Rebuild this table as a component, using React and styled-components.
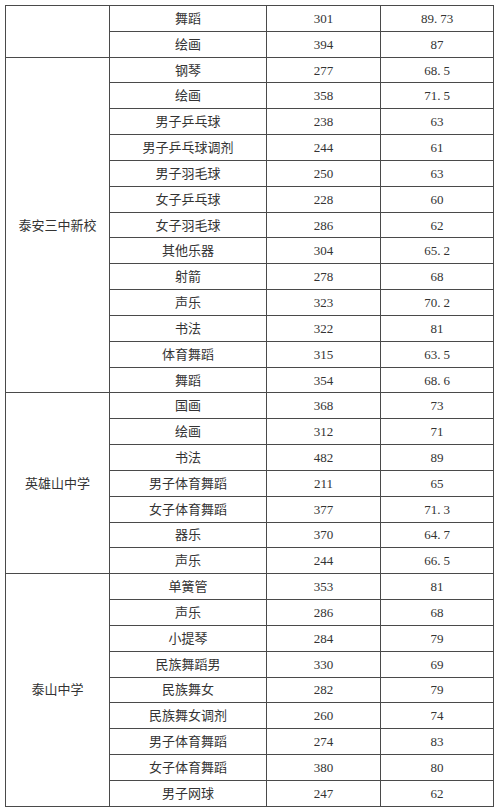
import styled, { createGlobalStyle } from 'styled-components';

const GlobalStyle = createGlobalStyle`
  html, body {
    margin: 0;
    padding: 0;
    background: #fff;
  }
`;

const Page = styled.div`
  padding: 5px 7px 3px 5px;
  background: #fff;
`;

const Table = styled.table`
  width: 488px;
  border-collapse: collapse;
  table-layout: fixed;
  font-family: 'Liberation Serif', 'Noto Sans CJK SC', serif;
  font-size: 13px;
  color: #333;
`;

const Row = styled.tr`
  height: 25.84px;
`;

const Cell = styled.td`
  border: 1px solid #4a4a4a;
  padding: 0;
  text-align: center;
  vertical-align: middle;
  line-height: 1;
  white-space: nowrap;
`;

const Dot = styled.span`
  padding-right: 3px;
`;

const groups = [
  {
    school: '',
    rows: [
      ['舞蹈', '301', '89.73'],
      ['绘画', '394', '87'],
    ],
  },
  {
    school: '泰安三中新校',
    rows: [
      ['钢琴', '277', '68.5'],
      ['绘画', '358', '71.5'],
      ['男子乒乓球', '238', '63'],
      ['男子乒乓球调剂', '244', '61'],
      ['男子羽毛球', '250', '63'],
      ['女子乒乓球', '228', '60'],
      ['女子羽毛球', '286', '62'],
      ['其他乐器', '304', '65.2'],
      ['射箭', '278', '68'],
      ['声乐', '323', '70.2'],
      ['书法', '322', '81'],
      ['体育舞蹈', '315', '63.5'],
      ['舞蹈', '354', '68.6'],
    ],
  },
  {
    school: '英雄山中学',
    rows: [
      ['国画', '368', '73'],
      ['绘画', '312', '71'],
      ['书法', '482', '89'],
      ['男子体育舞蹈', '211', '65'],
      ['女子体育舞蹈', '377', '71.3'],
      ['器乐', '370', '64.7'],
      ['声乐', '244', '66.5'],
    ],
  },
  {
    school: '泰山中学',
    rows: [
      ['单簧管', '353', '81'],
      ['声乐', '286', '68'],
      ['小提琴', '284', '79'],
      ['民族舞蹈男', '330', '69'],
      ['民族舞女', '282', '79'],
      ['民族舞女调剂', '260', '74'],
      ['男子体育舞蹈', '274', '83'],
      ['女子体育舞蹈', '380', '80'],
      ['男子网球', '247', '62'],
    ],
  },
];

// 小数点在原表里是全宽字体，点后留一点空
function Score({ value }) {
  const [a, b] = value.split('.');
  if (b === undefined) return value;
  return (
    <>
      {a}
      <Dot>.</Dot>
      {b}
    </>
  );
}

export default function App() {
  return (
    <Page>
      <GlobalStyle />
      <Table>
        <colgroup>
          <col style={{ width: '104px' }} />
          <col style={{ width: '157px' }} />
          <col style={{ width: '114px' }} />
          <col style={{ width: '113px' }} />
        </colgroup>
        <tbody>
          {groups.map((g, gi) =>
            g.rows.map((r, i) => (
              <Row key={gi + '-' + i}>
                {i === 0 && <Cell rowSpan={g.rows.length}>{g.school}</Cell>}
                <Cell>{r[0]}</Cell>
                <Cell>{r[1]}</Cell>
                <Cell>
                  <Score value={r[2]} />
                </Cell>
              </Row>
            ))
          )}
        </tbody>
      </Table>
    </Page>
  );
}
